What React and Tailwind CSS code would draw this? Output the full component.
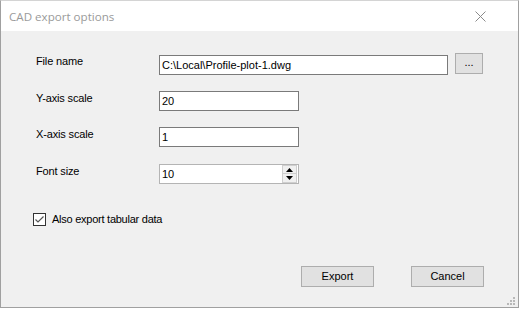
import React from "react";

const font = { fontFamily: '"Liberation Sans", Arial, sans-serif' };

function Label({ children }) {
  return (
    <div className="w-[123px] shrink-0 text-[11px] leading-[13px] text-black pt-[1px] tracking-[-0.15px]">{children}</div>
  );
}

function TextBox({ value, w }) {
  return (
    <div className={`${w} h-[20px] bg-white border border-[#7a7a7a] flex items-center pl-[2px] text-[11px] text-black`}>
      {value}
    </div>
  );
}

export default function App() {
  return (
    <div className="w-[519px] h-[309px] bg-white" style={font}>
      <div className="w-[519px] h-[308px] border border-[#a0a0a0] border-t-[#d4d4d4] flex flex-col box-border">
        <div className="h-[30px] bg-white flex items-center justify-between pl-[8px] pr-[32px] shrink-0">
          <span className="text-[11.6px] text-[#9a9a9a] pt-[1px]" style={{ fontFamily: '"Open Sans", "Liberation Sans", sans-serif' }}>CAD export options</span>
          <svg width="11" height="11" viewBox="0 0 11 11" className="mt-[1px]">
            <path d="M0.5 0.5 L10.5 10.5 M10.5 0.5 L0.5 10.5" stroke="#8a8a8a" strokeWidth="1" fill="none" />
          </svg>
        </div>
        <div className="flex-1 bg-[#f0f0f0] flex flex-col pl-[35px] pr-[34px] relative">
          <div className="flex items-start mt-[22px]">
            <Label><div className="mt-[1px]">File name</div></Label>
            <div className="mt-[2px]">
              <TextBox value="C:\Local\Profile-plot-1.dwg" w="w-[289px]" />
            </div>
            <div className="ml-[7px] w-[28px] h-[21px] bg-[#e1e1e1] border border-[#adadad] flex items-center justify-center text-[11px] text-black pb-[3px]">...</div>
          </div>
          <div className="flex items-start mt-[16px]">
            <Label>Y-axis scale</Label>
            <TextBox value="20" w="w-[140px]" />
          </div>
          <div className="flex items-start mt-[16px]">
            <Label>X-axis scale</Label>
            <TextBox value="1" w="w-[140px]" />
          </div>
          <div className="flex items-start mt-[17px]">
            <Label>Font size</Label>
            <div className="w-[140px] h-[20px] bg-white border border-[#b4b4b4] flex items-center pl-[2px] text-[11px] text-black relative">
              10
              <div className="absolute right-[1px] top-[0px] w-[15px] h-[18px] flex flex-col">
                <div className="h-[9px] bg-[#f0f0f0] border border-[#cfcfcf] flex items-center justify-center">
                  <svg width="7" height="4" viewBox="0 0 7 4"><path d="M3.5 0 L7 4 L0 4 Z" fill="#000" /></svg>
                </div>
                <div className="h-[9px] bg-[#f0f0f0] border border-[#cfcfcf] border-t-0 flex items-center justify-center">
                  <svg width="7" height="4" viewBox="0 0 7 4"><path d="M0 0 L7 0 L3.5 4 Z" fill="#000" /></svg>
                </div>
              </div>
            </div>
          </div>
          <div className="flex items-center mt-[27px] -ml-[3px]">
            <div className="w-[13px] h-[13px] border border-[#333333] bg-white flex items-center justify-center">
              <svg width="11" height="11" viewBox="0 0 11 11">
                <path d="M1.5 5.5 L4 8 L9.5 2.5" stroke="#555" strokeWidth="1.2" fill="none" />
              </svg>
            </div>
            <span className="ml-[6px] text-[11px] text-black tracking-[-0.25px]">Also export tabular data</span>
          </div>
          <div className="flex justify-end mt-[38px]">
            <div className="w-[73px] h-[21px] bg-[#e1e1e1] border border-[#adadad] flex items-center justify-center text-[11px] text-black">Export</div>
            <div className="ml-[37px] w-[73px] h-[21px] bg-[#e1e1e1] border border-[#adadad] flex items-center justify-center text-[11px] text-black">Cancel</div>
          </div>
          <svg width="9" height="9" viewBox="0 0 9 9" className="absolute right-[2px] bottom-[1px]">
            <rect x="6" y="0" width="2" height="2" fill="#b8b8b8" />
            <rect x="3" y="3" width="2" height="2" fill="#b8b8b8" />
            <rect x="6" y="3" width="2" height="2" fill="#b8b8b8" />
            <rect x="0" y="6" width="2" height="2" fill="#b8b8b8" />
            <rect x="3" y="6" width="2" height="2" fill="#b8b8b8" />
            <rect x="6" y="6" width="2" height="2" fill="#b8b8b8" />
          </svg>
        </div>
      </div>
    </div>
  );
}
